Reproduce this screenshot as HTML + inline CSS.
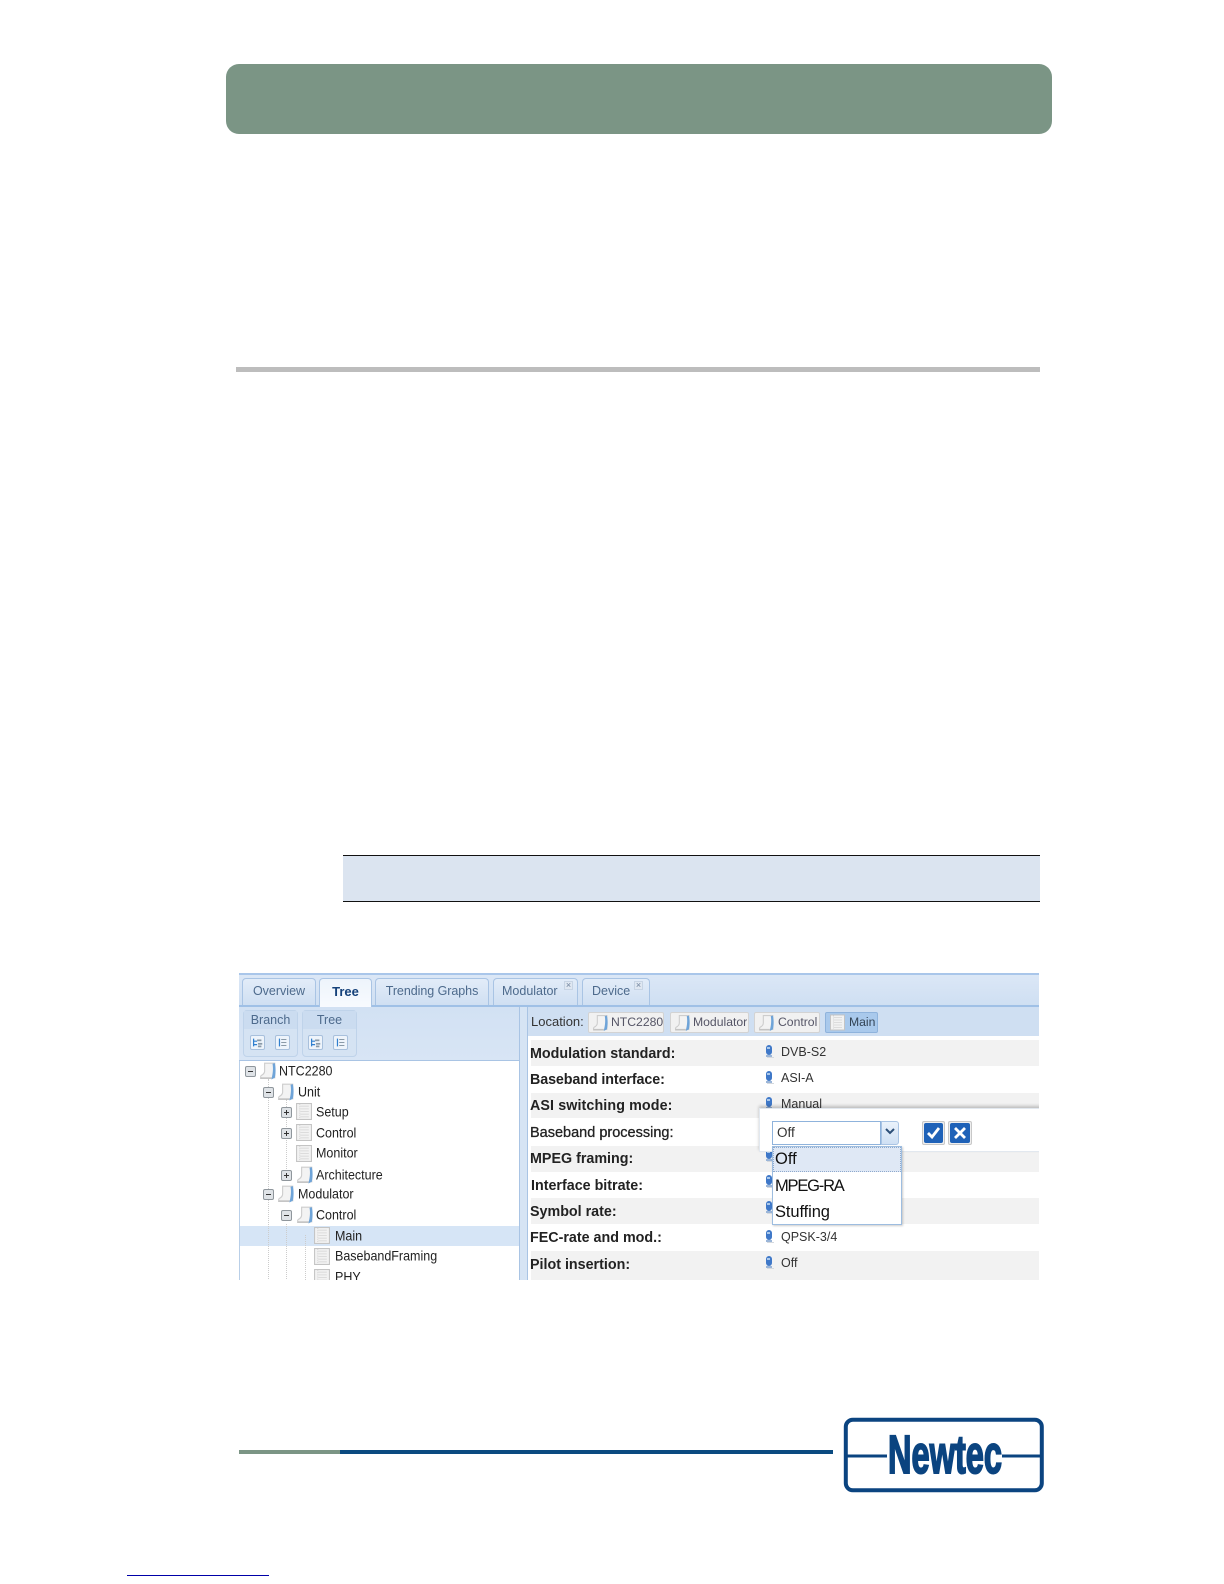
<!DOCTYPE html>
<html><head><meta charset="utf-8"><style>
html,body{margin:0;padding:0;background:#fff}
#p{position:relative;width:1224px;height:1584px;overflow:hidden;background:#fff;font-family:"Liberation Sans",sans-serif}
#p div,#p span,#p svg{position:absolute;display:block}
#s{left:239px;top:973px;width:800px;height:307px;overflow:hidden;background:#fff;filter:blur(.35px)}
#s div,#s span{white-space:nowrap}
.tab{top:5px;height:27px;border:1px solid #a9c4e4;border-bottom:0;border-radius:4px 4px 0 0;background:linear-gradient(#e2ecf8,#cfdff2);color:#4d6a8c;font-size:12.5px;line-height:25px;text-align:center;box-sizing:border-box}
.t{font-size:12.5px;color:#222;line-height:20px;height:20px;transform:scaleY(1.1);transform-origin:0 50%}
.ex{width:11px;height:11px;box-sizing:border-box;border:1px solid #8f969c;border-radius:2px;background:#dfe3e7}
.ex:before{content:"";position:absolute;left:2px;top:4px;width:5px;height:1px;background:#333}
.ex.pl:after{content:"";position:absolute;left:4px;top:2px;width:1px;height:5px;background:#333}
.z{left:292px;width:513px;background:#f2f2f2}
.lb{left:291px;font-size:14.3px;font-weight:bold;color:#222;line-height:20px;height:20px}
.v{left:542px;font-size:12.5px;color:#333;line-height:18px;height:18px}
.lc{top:39px;height:21px;box-sizing:border-box;border:1px solid #d3d3d3;border-radius:2px;background:#f1f1f1;color:#556;font-size:12.2px;line-height:18px}
.gb{box-sizing:border-box;top:37px;width:55px;height:47px;border:1px solid #bfd3ea;border-radius:4px;background:#d5e3f3}
.gh{left:0;top:0;width:53px;height:18px;background:#cbdcf0;text-align:center;color:#4d6a8c;font-size:12.5px;line-height:19px}
.ic{top:62px;width:15px;height:15px;box-sizing:border-box;border:1px solid #a8c0dc;border-radius:2px;background:#eef4fb}
.dd{left:536px;font-size:16.5px;color:#111;line-height:24px;height:24px}
</style></head><body><div id="p">
<svg width="0" height="0" style="left:0;top:0">
<symbol id="pg" viewBox="0 0 15 16"><rect x=".5" y=".5" width="14" height="15" fill="#f2f2f2" stroke="#c4c4c4"/><path d="M4 3h8M4 5.500h8M4 8h8M4 10.500h8M4 13h8" stroke="#dcdcdc"/><path d="M3.500 1v14" stroke="#d4d4d4" stroke-dasharray="1 1"/></symbol>
<symbol id="bk" viewBox="0 0 16 16"><path d="M5 1h9v13H3C1 14 1 13 2 12c2-1 3-2 3-4z" fill="#f3f3f3" stroke="#cdcdcd"/><path d="M14 1c1 4 1 9 0 13l-3 1.500c1-4 2-9 1-14z" fill="#6fa4d8"/><path d="M1 14.500h10" stroke="#bdbdbd"/></symbol>
<symbol id="bl" viewBox="0 0 9 14"><rect x="1" y="0" width="6" height="10" rx="3" fill="#3f78c8"/><rect x="2" y="2" width="3" height="2" fill="#a9c8ec"/><rect x="1" y="10" width="6" height="2" fill="#9ab5d8"/><rect x="2" y="12" width="7" height="1" fill="#d5d9de"/></symbol>
<symbol id="tr" viewBox="0 0 15 15"><path d="M3 3v9M3 6h4M3 10h4" stroke="#2f7fcf" fill="none" stroke-width="1.400"/><rect x="7" y="4" width="5" height="2" fill="#8a9aa8"/><rect x="8" y="8" width="5" height="2" fill="#8a9aa8"/><rect x="8" y="11" width="4" height="2" fill="#8a9aa8"/></symbol>
<symbol id="ls" viewBox="0 0 15 15"><path d="M4 3v9" stroke="#2f7fcf" stroke-width="1.400"/><path d="M6 4h6M6 7.500h6M6 11h6" stroke="#8a9aa8" stroke-width="1.200"/></symbol>
</svg>

<div style="left:226px;top:64px;width:826px;height:70px;border-radius:13px;background:#7b9585"></div>
<div style="left:236px;top:367px;width:804px;height:5px;background:#bdbdbd"></div>
<div style="left:343px;top:855px;width:697px;height:47px;box-sizing:border-box;border-top:1px solid #111;border-bottom:1px solid #111;background:#dbe4f0"></div>

<div id="s">
<div style="left:0;top:0;width:805px;height:36px;background:linear-gradient(#dbe7f6,#cddef2);border-top:2px solid #a9c6ea;box-sizing:border-box"></div>
<div style="left:0;top:32px;width:805px;height:2px;background:#9fc0e6"></div>
<div class="tab" style="left:3px;width:74px">Overview</div>
<div class="tab" style="left:80px;width:53px;height:30px;background:linear-gradient(#eef4fb,#f8fbff);color:#15417a;font-weight:bold;font-size:13px">Tree</div>
<div class="tab" style="left:136px;width:114px;letter-spacing:-.05px">Trending Graphs</div>
<div class="tab" style="left:254px;width:85px;text-align:left;padding-left:8px">Modulator</div>
<div class="tab" style="left:343px;width:68px;text-align:left;padding-left:9px">Device</div>
<div style="left:325px;top:8px;width:7px;height:7px;background:#dfe7f1;border:1px solid #c7d4e4;color:#6f829c;font-size:9px;line-height:7px;text-align:center">×</div>
<div style="left:395px;top:8px;width:7px;height:7px;background:#dfe7f1;border:1px solid #c7d4e4;color:#6f829c;font-size:9px;line-height:7px;text-align:center">×</div>

<div style="left:0;top:34px;width:280px;height:54px;background:linear-gradient(#d2e1f3,#d8e5f5)"></div>
<div style="left:0;top:87px;width:280px;height:1px;background:#a9c4e4"></div>
<div class="gb" style="left:4px"><div class="gh">Branch</div></div>
<div class="gb" style="left:63px"><div class="gh">Tree</div></div>
<div class="ic" style="left:11px"><svg width="13" height="13" style="left:0;top:0"><use href="#tr"/></svg></div>
<div class="ic" style="left:36px"><svg width="13" height="13" style="left:0;top:0"><use href="#ls"/></svg></div>
<div class="ic" style="left:69px"><svg width="13" height="13" style="left:0;top:0"><use href="#tr"/></svg></div>
<div class="ic" style="left:94px"><svg width="13" height="13" style="left:0;top:0"><use href="#ls"/></svg></div>

<div style="left:0;top:253px;width:280px;height:20px;background:#d6e5f6"></div>
<div style="left:0;top:88px;width:1px;height:223px;background:#b9cfe8"></div>
<div style="left:29px;top:106px;width:0;height:206px;border-left:1px dotted #ccc"></div>
<div style="left:47px;top:126px;width:0;height:80px;border-left:1px dotted #ccc"></div>
<div style="left:47px;top:251px;width:0;height:61px;border-left:1px dotted #ccc"></div>
<div style="left:66px;top:262px;width:0;height:49px;border-left:1px dotted #ccc"></div>

<div class="ex" style="left:6px;top:93px"></div><svg width="18" height="18" style="left:20px;top:89px"><use href="#bk"/></svg><div class="t" style="left:40px;top:88px">NTC2280</div>
<div class="ex" style="left:24px;top:114px"></div><svg width="18" height="18" style="left:38px;top:110px"><use href="#bk"/></svg><div class="t" style="left:59px;top:109px">Unit</div>
<div class="ex pl" style="left:42px;top:134px"></div><svg width="16" height="17" style="left:57px;top:130px"><use href="#pg"/></svg><div class="t" style="left:77px;top:129px">Setup</div>
<div class="ex pl" style="left:42px;top:155px"></div><svg width="16" height="17" style="left:57px;top:151px"><use href="#pg"/></svg><div class="t" style="left:77px;top:150px">Control</div>
<svg width="16" height="17" style="left:57px;top:172px"><use href="#pg"/></svg><div class="t" style="left:77px;top:170px">Monitor</div>
<div class="ex pl" style="left:42px;top:197px"></div><svg width="18" height="18" style="left:57px;top:193px"><use href="#bk"/></svg><div class="t" style="left:77px;top:192px">Architecture</div>
<div class="ex" style="left:24px;top:216px"></div><svg width="18" height="18" style="left:38px;top:212px"><use href="#bk"/></svg><div class="t" style="left:59px;top:211px">Modulator</div>
<div class="ex" style="left:42px;top:237px"></div><svg width="18" height="18" style="left:57px;top:233px"><use href="#bk"/></svg><div class="t" style="left:77px;top:232px">Control</div>
<svg width="16" height="17" style="left:75px;top:254px"><use href="#pg"/></svg><div class="t" style="left:96px;top:253px">Main</div>
<svg width="16" height="17" style="left:75px;top:275px"><use href="#pg"/></svg><div class="t" style="left:96px;top:273px">BasebandFraming</div>
<svg width="16" height="17" style="left:75px;top:296px"><use href="#pg"/></svg><div class="t" style="left:96px;top:294px">PHY</div>

<div style="left:280px;top:34px;width:9px;height:277px;background:#d6e4f4;border-left:1px solid #a9c4e4;border-right:1px solid #a9c4e4;box-sizing:border-box"></div>
<div style="left:289px;top:35px;width:516px;height:28px;background:#cfdff2"></div>
<div style="left:292px;top:39px;font-size:13px;line-height:20px;color:#333">Location:</div>
<div class="lc" style="left:349px;width:76px;padding-left:22px"><svg width="17" height="18" style="left:3px;top:1px"><use href="#bk"/></svg>NTC2280</div>
<div class="lc" style="left:431px;width:79px;padding-left:22px"><svg width="17" height="18" style="left:3px;top:1px"><use href="#bk"/></svg>Modulator</div>
<div class="lc" style="left:515px;width:66px;padding-left:23px"><svg width="17" height="18" style="left:3px;top:1px"><use href="#bk"/></svg>Control</div>
<div class="lc" style="left:586px;width:53px;padding-left:23px;background:#a9c9ec;border-color:#8fb3dc;color:#345"><svg width="15" height="17" style="left:4px;top:1px"><use href="#pg"/></svg>Main</div>

<div class="z" style="top:67px;height:26px"></div>
<div class="z" style="top:120px;height:25px"></div>
<div class="z" style="top:173px;height:26px"></div>
<div class="z" style="top:225px;height:26px"></div>
<div class="z" style="top:278px;height:33px"></div>

<div class="lb" style="top:71px">Modulation standard:</div>
<div class="lb" style="top:97px;letter-spacing:-.1px">Baseband interface:</div>
<div class="lb" style="top:123px;letter-spacing:.1px">ASI switching mode:</div>
<div class="lb" style="top:150px;font-weight:normal;-webkit-text-stroke:.3px #222;font-size:14.500px">Baseband processing:</div>
<div class="lb" style="top:176px">MPEG framing:</div>
<div class="lb" style="top:203px;left:292px">Interface bitrate:</div>
<div class="lb" style="top:229px">Symbol rate:</div>
<div class="lb" style="top:255px">FEC-rate and mod.:</div>
<div class="lb" style="top:282px">Pilot insertion:</div>

<svg width="9" height="14" style="left:526px;top:72px"><use href="#bl"/></svg><div class="v" style="top:70px">DVB-S2</div>
<svg width="9" height="14" style="left:526px;top:98px"><use href="#bl"/></svg><div class="v" style="top:96px">ASI-A</div>
<svg width="9" height="14" style="left:526px;top:124px"><use href="#bl"/></svg><div class="v" style="top:122px">Manual</div>
<svg width="9" height="14" style="left:526px;top:176px"><use href="#bl"/></svg>
<svg width="9" height="14" style="left:526px;top:202px"><use href="#bl"/></svg>
<svg width="9" height="14" style="left:526px;top:228px"><use href="#bl"/></svg>
<svg width="9" height="14" style="left:526px;top:257px"><use href="#bl"/></svg><div class="v" style="top:255px">QPSK-3/4</div>
<svg width="9" height="14" style="left:526px;top:283px"><use href="#bl"/></svg><div class="v" style="top:281px">Off</div>

<div style="left:520px;top:135px;width:290px;height:44px;background:#fff;border:1px solid #e2e8ef;box-shadow:0 -2px 3px rgba(0,0,0,.22);box-sizing:border-box"></div>
<div style="left:533px;top:148px;width:109px;height:24px;box-sizing:border-box;border:1px solid #8fb3dc;background:#fff;font-size:13.500px;line-height:22px;padding-left:4px;color:#333">Off</div>
<div style="left:642px;top:148px;width:18px;height:24px;box-sizing:border-box;border:1px solid #a9c4e4;border-radius:0 3px 3px 0;background:linear-gradient(#eaf2fb,#cfe0f4)"><svg width="10" height="7" style="left:3px;top:6px"><path d="M1 1l4 4 4-4" fill="none" stroke="#2c4f78" stroke-width="2"/></svg></div>
<div style="left:683px;top:148px;width:23px;height:24px;box-sizing:border-box;border:1px solid #c8c8c8;border-radius:2px;background:#eee"><svg width="19" height="20" style="left:1px;top:1px"><rect width="19" height="20" rx="2" fill="#1f62b8"/><path d="M4 10l4 4 7-9" fill="none" stroke="#fff" stroke-width="2.800"/></svg></div>
<div style="left:709px;top:148px;width:24px;height:24px;box-sizing:border-box;border:1px solid #c8c8c8;border-radius:2px;background:#eee"><svg width="20" height="20" style="left:1px;top:1px"><rect width="20" height="20" rx="2" fill="#1f62b8"/><path d="M5 5l10 10M15 5L5 15" fill="none" stroke="#fff" stroke-width="2.800"/></svg></div>

<div style="left:533px;top:173px;width:130px;height:79px;box-sizing:border-box;border:1px solid #9dbde0;background:#fff;box-shadow:1px 1px 2px rgba(0,0,0,.2)"></div>
<div style="left:534px;top:174px;width:128px;height:25px;box-sizing:border-box;border:1px dotted #8fa9cc;background:#dfe8f5"></div>
<div class="dd" style="top:174px">Off</div>
<div class="dd" style="top:201px;letter-spacing:-1.2px">MPEG-RA</div>
<div class="dd" style="top:227px;letter-spacing:-.1px">Stuffing</div>
</div>

<div style="left:239px;top:1450px;width:101px;height:4px;background:#7b9585"></div>
<div style="left:340px;top:1450px;width:493px;height:4px;background:#0b4a80"></div>
<svg width="204" height="78" style="left:842px;top:1416px"><rect x="3.800" y="3.800" width="196" height="70.500" rx="7" fill="#fff" stroke="#0b4480" stroke-width="4"/><path d="M5 40h40M160 40h40" stroke="#0b4480" stroke-width="3"/><text x="46" y="57" font-family="Liberation Sans" font-weight="bold" font-size="54" fill="#0b4480" textLength="114" lengthAdjust="spacingAndGlyphs" stroke="#0b4480" stroke-width="2">Newtec</text></svg>
<div style="left:127px;top:1575px;width:142px;height:1px;background:#0000a8"></div>
</div></body></html>
